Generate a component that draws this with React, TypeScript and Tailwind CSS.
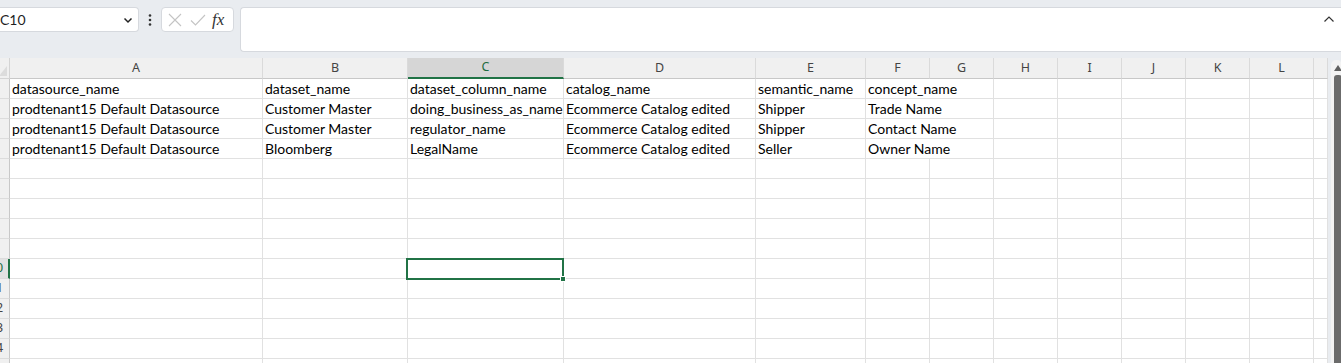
import React from 'react';

const cols = [
  { key: 'A', w: 'w-[253px]' },
  { key: 'B', w: 'w-[145px]' },
  { key: 'C', w: 'w-[156px]' },
  { key: 'D', w: 'w-[192px]' },
  { key: 'E', w: 'w-[110px]' },
  { key: 'F', w: 'w-[64px]' },
  { key: 'G', w: 'w-[64px]' },
  { key: 'H', w: 'w-[64px]' },
  { key: 'I', w: 'w-[64px]' },
  { key: 'J', w: 'w-[64px]' },
  { key: 'K', w: 'w-[64px]' },
  { key: 'L', w: 'w-[64px]' },
  { key: 'M', w: 'w-[14px]' },
];

const data: string[][] = [
  ['datasource_name', 'dataset_name', 'dataset_column_name', 'catalog_name', 'semantic_name', 'concept_name'],
  ['prodtenant15 Default Datasource', 'Customer Master', 'doing_business_as_name', 'Ecommerce Catalog edited', 'Shipper', 'Trade Name'],
  ['prodtenant15 Default Datasource', 'Customer Master', 'regulator_name', 'Ecommerce Catalog edited', 'Shipper', 'Contact Name'],
  ['prodtenant15 Default Datasource', 'Bloomberg', 'LegalName', 'Ecommerce Catalog edited', 'Seller', 'Owner Name'],
];

const ROWS = 15;

const FormulaBar: React.FC = () => (
  <div className="flex h-[58px] shrink-0 items-start pt-[7px]">
    <div className="flex h-[25px] w-[139px] items-center justify-between rounded-r-[4px] border border-l-0 border-[#d6d9de] bg-white pr-[4px]">
      <span className="text-[14px] leading-none text-[#1f1f1f]">C10</span>
      <svg width="10" height="10" viewBox="0 0 10 10" className="mr-[1px]">
        <path d="M1.5 3.5 L5 7 L8.5 3.5" fill="none" stroke="#222" strokeWidth="1.5" />
      </svg>
    </div>
    <div className="flex h-[25px] w-[22px] items-center justify-center">
      <svg width="4" height="14" viewBox="0 0 4 14">
        <circle cx="2" cy="2.5" r="1.3" fill="#333" />
        <circle cx="2" cy="7" r="1.3" fill="#333" />
        <circle cx="2" cy="11.5" r="1.3" fill="#333" />
      </svg>
    </div>
    <div className="flex h-[25px] w-[73px] items-center rounded-[4px] border border-[#d6d9de] bg-white pl-[6px]">
      <svg width="14" height="14" viewBox="0 0 14 14">
        <path d="M1 1 L13 13 M13 1 L1 13" stroke="#c4c4c4" strokeWidth="1.1" fill="none" />
      </svg>
      <svg width="16" height="14" viewBox="0 0 16 14" className="ml-[8px]">
        <path d="M1 7.5 L5.5 12 L15 2" stroke="#c4c4c4" strokeWidth="1.1" fill="none" />
      </svg>
      <span className="ml-[6px] font-['Liberation_Serif',serif] text-[17px] italic leading-none text-[#333]">fx</span>
    </div>
    <div className="ml-[6px] flex h-[45px] flex-1 justify-end rounded-l-[4px] border border-r-0 border-[#d6d9de] bg-white pr-[6px] pt-[7px]">
      <svg width="12" height="8" viewBox="0 0 12 8">
        <path d="M1.5 6.5 L6 2 L10.5 6.5" fill="none" stroke="#333" strokeWidth="1.2" />
      </svg>
    </div>
  </div>
);

const cellBase =
  'shrink-0 whitespace-nowrap border-b border-[#e1e1e1] pl-[2px] text-[14px] leading-[19px] text-black';

const Grid: React.FC = () => (
  <div className="relative w-[1328px] shrink-0 bg-white">
    {/* header row */}
    <div className="flex h-[21px] bg-[#f0f0f0]">
      <div className="relative w-[10px] shrink-0 border-r border-b border-[#d4d4d4] bg-[#f0f0f0]">
        <svg width="8" height="10" viewBox="0 0 8 10" className="absolute bottom-[2px] right-[2px]">
          <path d="M8 0 L8 10 L0 10 Z" fill="#dcdcdc" />
        </svg>
      </div>
      {cols.map((c) => (
        <div
          key={c.key}
          className={`${c.w} shrink-0 border-r border-[#dadada] ${
            c.key === 'C'
              ? 'border-b-2 border-b-[#217346] bg-[#d6d6d6] text-[#1e6b40]'
              : 'border-b border-b-[#c8c8c8] text-[#444]'
          } flex items-center justify-center overflow-hidden font-['Noto_Sans',sans-serif] text-[12.5px] leading-none`}
        >
          {c.key === 'M' ? '' : c.key}
        </div>
      ))}
    </div>
    {/* data rows */}
    {Array.from({ length: ROWS }).map((_, r) => {
      const rowNum = r + 1;
      const selected = rowNum === 10;
      const row = data[r];
      return (
        <div key={r} className="flex h-[20px]">
          <div
            className={`w-[10px] shrink-0 overflow-hidden border-b border-[#dcdcdc] ${
              selected ? 'border-r-2 border-r-[#217346] bg-[#e2e2e2]' : 'border-r border-r-[#c8c8c8] bg-[#f0f0f0]'
            }`}
          >
            <div
              className={`-ml-[19px] flex h-full w-[30px] items-center justify-center font-['Noto_Sans',sans-serif] text-[12.5px] leading-none ${
                selected ? 'text-[#1e6b40]' : 'text-[#444]'
              }`}
            >
              {rowNum}
            </div>
          </div>
          {row ? (
            <>
              {cols.slice(0, 5).map((c, ci) => (
                <div key={c.key} className={`${c.w} ${cellBase} overflow-hidden border-r`}>
                  {row[ci]}
                </div>
              ))}
              {/* F text spills over the empty G cell */}
              <div className={`w-[128px] ${cellBase} overflow-hidden border-r`}>{row[5]}</div>
              {cols.slice(7).map((c) => (
                <div key={c.key} className={`${c.w} ${cellBase} border-r`} />
              ))}
            </>
          ) : (
            cols.map((c) => <div key={c.key} className={`${c.w} ${cellBase} border-r`} />)
          )}
        </div>
      );
    })}
    {/* selected cell C10 */}
    <div className="pointer-events-none absolute left-[406px] top-[200px] h-[22px] w-[158px] border-2 border-[#217346]">
      <div className="absolute -bottom-[4px] -right-[4px] h-[6px] w-[6px] border border-white bg-[#217346]" />
    </div>
  </div>
);

const Scrollbar: React.FC = () => (
  <div className="flex flex-1 pt-[2px]">
    <div className="w-[3px] bg-[#e9ecf0]" />
    <div className="flex flex-1 flex-col rounded-t-[5px] bg-[#f3f3f3] pl-[3px]">
      <div className="flex h-[15px] justify-center pt-[5px]">
        <svg width="8" height="6" viewBox="0 0 8 6">
          <path d="M0 6 L4 0 L8 6 Z" fill="#606060" />
        </svg>
      </div>
      <div className="flex-1 rounded-t-[3px] bg-[#6b6b6b]" />
    </div>
  </div>
);

export default function App() {
  return (
    <div className="flex h-[363px] w-[1341px] flex-col overflow-hidden bg-[#e9ecf0] font-['Lato','Liberation_Sans',sans-serif]">
      <FormulaBar />
      <div className="flex min-h-0 flex-1 overflow-hidden">
        <Grid />
        <Scrollbar />
      </div>
    </div>
  );
}
